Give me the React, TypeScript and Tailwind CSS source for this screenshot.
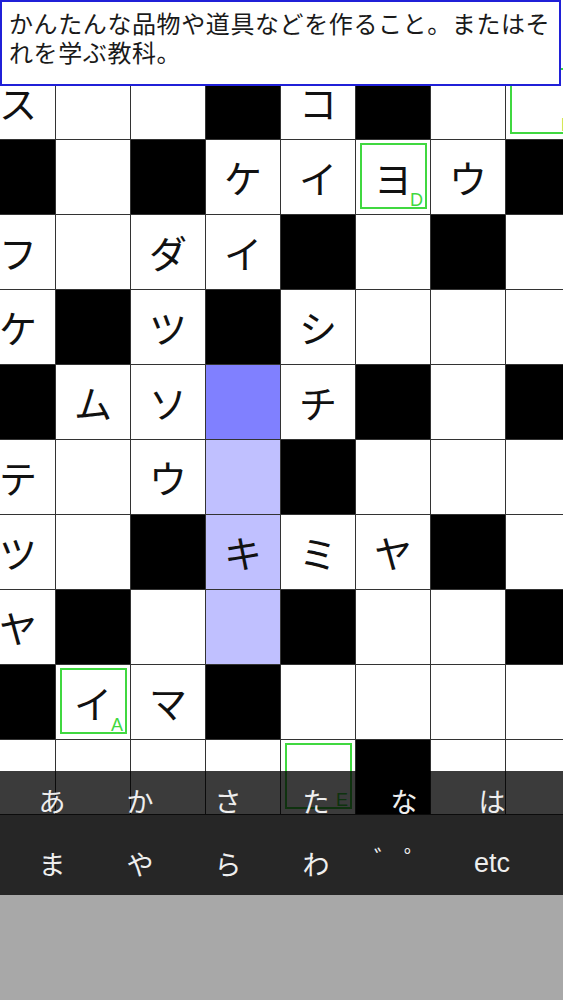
import React from "react";

type Cell = { t: "w" | "b" | "B" | "L"; ch?: string; box?: string };

const w = (ch?: string, box?: string): Cell => ({ t: "w", ch, box });
const b: Cell = { t: "b" };
const B: Cell = { t: "B" };
const L = (ch?: string): Cell => ({ t: "L", ch });

const rows: Cell[][] = [
  [w("ス"), w(), w(), b, w("コ"), b, w(), w(undefined, "B")],
  [b, w(), b, w("ケ"), w("イ"), w("ヨ", "D"), w("ウ"), b],
  [w("フ"), w(), w("ダ"), w("イ"), b, w(), b, w()],
  [w("ケ"), b, w("ツ"), b, w("シ"), w(), w(), w()],
  [b, w("ム"), w("ソ"), B, w("チ"), b, w(), b],
  [w("テ"), w(), w("ウ"), L(), b, w(), w(), w()],
  [w("ツ"), w(), b, L("キ"), w("ミ"), w("ヤ"), b, w()],
  [w("ヤ"), b, w(), L(), b, w(), w(), b],
  [b, w("イ", "A"), w("マ"), b, w(), w(), w(), w()],
  [w(), w(), w(), w(), w(undefined, "E"), b, w(), w()],
];

const bgClass: Record<Cell["t"], string> = {
  w: "bg-white",
  b: "bg-black",
  B: "bg-[#8080ff]",
  L: "bg-[#c0c0ff]",
};

function GridCell({ cell }: { cell: Cell }) {
  return (
    <div
      className={`relative w-[75px] h-[75px] border-r border-b border-[#333333] flex items-center justify-center ${bgClass[cell.t]}`}
    >
      {cell.ch && (
        <span className="text-[38px] leading-none text-[#111111] [font-family:'Noto_Sans_CJK_JP',sans-serif]">
          {cell.ch}
        </span>
      )}
      {cell.box && (
        <div className="absolute left-[4px] top-[3px] w-[67px] h-[66px] border-2 border-[#40d840]">
          <span className="absolute right-[2px] bottom-[-2px] text-[18px] leading-[18px] text-[#40d840] [font-family:'Liberation_Sans',Arial,sans-serif]">
            {cell.box}
          </span>
        </div>
      )}
    </div>
  );
}

const row1 = ["あ", "か", "さ", "た", "な", "は"];
const row2 = ["ま", "や", "ら", "わ", "゛゜", "etc"];

export default function App() {
  return (
    <div className="relative w-[563px] h-[1000px] overflow-hidden bg-white [font-family:'Noto_Sans_CJK_JP',sans-serif]">
      <div className="grid grid-cols-[repeat(8,75px)] w-max -ml-[19px] mt-[65px]">
        {rows.map((r, i) =>
          r.map((c, j) => <GridCell key={`${i}-${j}`} cell={c} />)
        )}
      </div>

      <div className="absolute top-0 left-0 w-[561px] h-[86px] border-2 border-[#2020d8] bg-white pl-[7px] pt-[6px] text-[24px] leading-[29px] tracking-[0.6px] text-[#1a1a1a] whitespace-nowrap [text-spacing-trim:space-all] [font-family:'Noto_Sans_CJK_JP',sans-serif]">
        <div>かんたんな品物や道具などを作ること。またはそ</div>
        <div>れを学ぶ教科。</div>
      </div>

      <div className="absolute bottom-0 left-0 w-full flex flex-col">
        <div className="h-[44px] bg-[rgba(0,0,0,0.77)] flex items-end pl-[8px] pb-[1px]">
          {row1.map((k) => (
            <div
              key={k}
              className="w-[88px] text-center text-[27px] leading-[27px] text-[#eeeeee]"
            >
              {k}
            </div>
          ))}
        </div>
        <div className="h-[80px] bg-[#262626] flex items-center pl-[8px] pt-[16px]">
          {row2.map((k) => (
            <div
              key={k}
              className={`w-[88px] text-center text-[#eeeeee] ${
                k === "etc"
                  ? "text-[27px] leading-[27px] [font-family:'Liberation_Sans',Arial,sans-serif]"
                  : k === "゛゜"
                  ? "text-[24px] leading-[24px] tracking-[6px] -mt-[10px]"
                  : "text-[27px] leading-[27px]"
              }`}
            >
              {k}
            </div>
          ))}
        </div>
        <div className="h-[105px] bg-[#a8a8a8]" />
      </div>
    </div>
  );
}
